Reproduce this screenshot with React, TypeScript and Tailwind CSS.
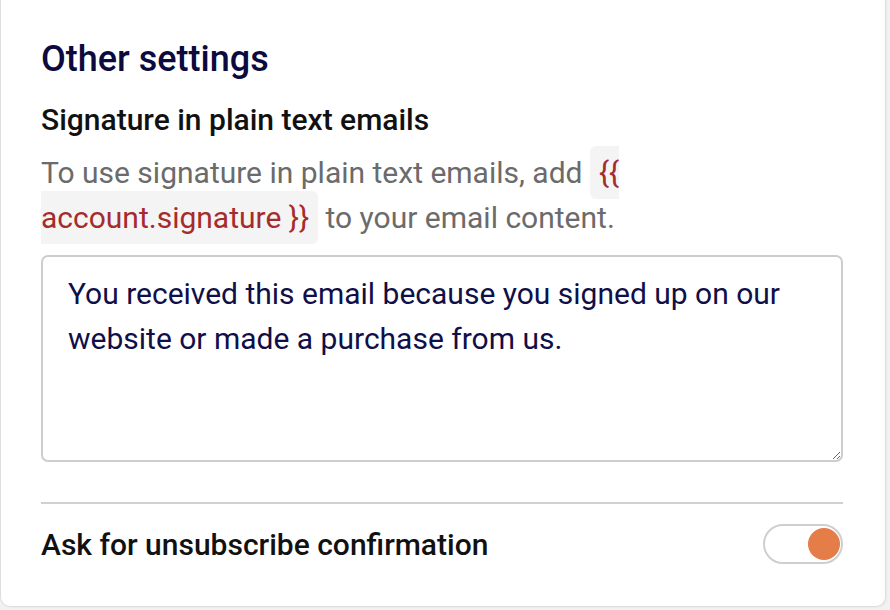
import { useState } from 'react';

function Toggle({ on, onChange }: { on: boolean; onChange: (v: boolean) => void }) {
  return (
    <button
      type="button"
      onClick={() => onChange(!on)}
      className={`flex items-center w-[80px] h-[40px] rounded-full border-2 border-[#cfcfcf] bg-white px-[1px] ${
        on ? 'justify-end' : 'justify-start'
      }`}
    >
      <span className={`block w-[32px] h-[32px] rounded-full ${on ? 'bg-[#e57d48]' : 'bg-[#cfcfcf]'}`} />
    </button>
  );
}

export default function App() {
  const [confirmUnsub, setConfirmUnsub] = useState(true);
  const [signature, setSignature] = useState(
    'You received this email because you signed up on our website or made a purchase from us.'
  );

  return (
    <div className="min-h-[610px] w-[890px] bg-[#f2f2f2] pr-[4px] pb-[3px] font-['Roboto',sans-serif]">
      <div className="bg-white border border-t-0 border-[#dedede] rounded-b-[10px] pl-10 pr-[42px] pt-[39px] pb-[42px] shadow-[1px_1px_2px_rgba(0,0,0,0.04)]">
        <h2 className="text-[36px] leading-[40px] font-medium text-[#0c0a3e]">Other settings</h2>

        <h3 className="mt-[23px] text-[30px] leading-[36px] font-medium text-[#111]">
          Signature in plain text emails
        </h3>
        <p className="mt-[12px] text-[30px] leading-[45px] text-[#6b6b6b]">
          To use signature in plain text emails, add{' '}
          <code className="font-['Roboto',sans-serif] text-[#a62b2b] bg-[#f4f4f4] rounded-[6px] px-[9px] py-[9px]">
            {'{{ account.signature }}'}
          </code>{' '}
          to your email content.
        </p>

        <textarea
          value={signature}
          onChange={(e) => setSignature(e.target.value)}
          className="mt-[15px] block w-full h-[207px] border-2 border-[#cdcdcd] rounded-[7px] px-[25px] py-[14px] text-[30px] leading-[45px] text-[#100f48] outline-none"
        />

        <div className="mt-[40px] h-[2px] bg-[#d0d0d0]" />

        <div className="mt-[20px] flex items-center justify-between h-[40px]">
          <span className="text-[30px] font-medium text-[#111]">Ask for unsubscribe confirmation</span>
          <Toggle on={confirmUnsub} onChange={setConfirmUnsub} />
        </div>
      </div>
    </div>
  );
}
